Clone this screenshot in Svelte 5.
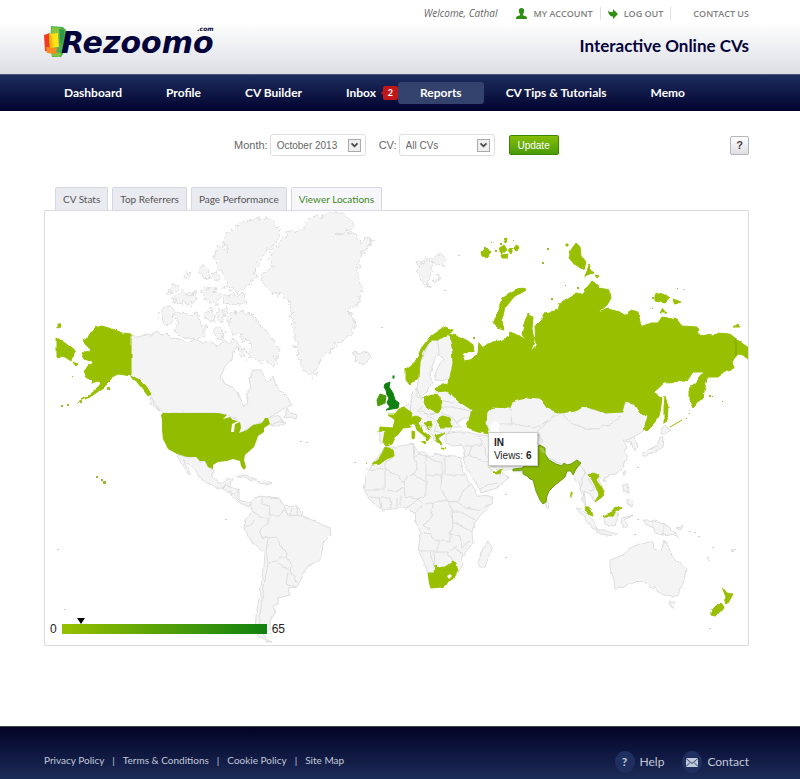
<script>
	const account = [
		{ label: 'MY ACCOUNT', icon: 'user' },
		{ label: 'LOG OUT', icon: 'arrow' },
		{ label: 'CONTACT US', icon: '' }
	];

	const nav = [
		{ label: 'Dashboard' },
		{ label: 'Profile' },
		{ label: 'CV Builder' },
		{ label: 'Inbox', badge: 2 },
		{ label: 'Reports', active: true },
		{ label: 'CV Tips & Tutorials' },
		{ label: 'Memo' }
	];

	const tabs = ['CV Stats', 'Top Referrers', 'Page Performance', 'Viewer Locations'];
	const footerLinks = ['Privacy Policy', 'Terms & Conditions', 'Cookie Policy', 'Site Map'];

	let activeTab = 'Viewer Locations';
	let month = 'October 2013';
	let cv = 'All CVs';

	const max = 65;
	const hovered = { code: 'IN', views: 6 };

	// countries without any views
	const land = [
		// north america
		'131,335 140,337 145,334 150,335 157,331 161,335 167,333 172,338 180,339 187,343 195,339 203,343 210,341 217,346 224,340 229,344 233,338 238,345 233,352 232,360 225,366 220,377 223,383 232,387 238,392 241,400 244,406 248,403 246,395 251,388 249,379 253,370 260,370 264,378 267,383 273,377 277,387 284,394 290,400 292,405 280,411 270,416 277,416 283,420 274,426 270,423 267,418 262,423 253,425 247,430 239,433 241,424 235,419 227,415 218,413 163,413 153,401 150,394 140,381 131,376',
		'284,418 288,408 291,413 297,415 296,419 290,417',
		'271,425 280,421 285,422 276,427',
		'151,397 160,411 155,408 150,401',
		'177,455 187,457 196,457 200,461 205,461 208,467 213,469 213,477 217,483 225,483 227,478 233,478 230,487 239,490 239,500 247,503 252,503 249,507 240,503 232,495 222,489 207,483 198,475 193,468 183,459 186,466 191,473 188,473 181,463',
		'236,476 243,474 251,477 257,480 251,480 244,477',
		'257,482 265,481 272,483 266,485 259,484',
		// south america
		'251,503 255,498 262,496 270,498 280,499 285,505 297,507 305,518 312,520 320,524 330,528 331,535 323,543 322,557 318,562 307,567 303,575 297,587 290,588 289,595 278,598 278,604 273,606 275,613 270,621 270,628 263,634 265,639 272,642 266,642 258,636 255,627 257,608 260,595 262,580 264,553 253,543 244,528 245,520 251,513',
		// iceland
		'352,353 356,351 358,354 368,352 372,357 368,361 362,364 355,361 356,357',
		// scandinavia
		'430,340 438,340 443,336 450,334 452,348 455,365 450,378 442,381 435,379 436,370 443,359 438,354 433,364 430,375 432,383 427,392 420,397 417,388 419,377 420,362',
		// central and eastern europe
		'403,408 410,402 413,397 412,391 417,388 417,397 424,399 436,397 436,389 449,386 457,400 472,410 469,418 463,418 456,423 462,428 453,428 449,433 441,436 436,443 429,432 424,426 415,425 407,421',
		'379,430 385,432 384,442 380,442',
		// asia
		'446,434 456,432 467,432 479,435 490,436 486,422 487,412 493,407 510,408 513,402 527,397 540,398 548,408 560,413 583,406 605,413 622,412 626,401 634,403 641,413 648,418 644,430 635,437 638,447 634,451 631,442 623,441 627,447 624,451 627,458 624,466 617,473 603,479 598,477 602,488 601,495 594,501 590,494 584,491 586,507 591,508 593,516 587,511 583,500 581,487 575,479 572,470 560,466 547,458 540,462 530,474 513,470 500,470 490,465 486,461 493,472 502,471 508,478 497,488 481,493 477,485 463,463 465,451 462,445 453,446 446,443',
		'546,502 550,505 549,509 546,507',
		'661,430 664,425 671,430 665,434 661,434',
		'643,453 650,448 657,447 660,437 664,437 663,447 654,452 646,457 642,457',
		'623,471 626,471 624,476',
		'623,484 627,484 628,493 624,491',
		'627,499 633,501 632,507 627,504',
		'576,508 581,509 593,520 598,530 592,528 584,518',
		'597,531 605,531 617,534 616,536 600,534',
		'603,517 609,514 619,513 615,526 607,525',
		'622,518 631,516 624,520 629,526 624,528 621,523',
		'642,520 650,520 658,522 668,526 676,534 679,538 670,534 662,535 655,533 653,527 645,524',
		'677,528 683,526 681,530',
		'588,475 592,479 589,474',
		'603,480 606,480 604,483',
		// africa
		'385,447 395,447 413,444 418,452 424,452 430,457 435,454 445,455 462,457 460,463 466,477 472,485 479,496 493,497 491,505 475,522 472,532 473,543 462,556 463,566 458,572 440,575 428,573 422,557 418,550 421,533 415,523 414,513 408,507 400,508 382,510 370,500 364,490 366,477 372,465',
		'488,542 492,547 485,567 479,567 479,557 482,550',
		// australia
		'610,560 623,555 632,547 642,543 647,541 653,542 654,548 662,551 664,540 669,548 671,555 677,560 686,570 683,583 678,595 672,597 665,596 657,591 655,586 652,589 645,582 630,583 624,587 615,588 614,580 610,568',
		'669,602 676,602 673,609',
		// small pacific islands
		'707,558 711,561 708,558',
		'731,551 736,549 733,552'
	];

	const arctic = [
		'260,275 273,267 268,258 277,247 287,233 298,231 307,227 308,218 318,217 330,211 347,215 355,227 346,232 335,235 350,233 356,233 360,242 366,238 373,240 367,248 362,255 359,265 358,277 362,290 358,303 350,310 347,313 355,318 353,333 345,340 337,343 330,350 322,357 318,367 313,377 303,371 298,357 295,340 293,323 290,303 283,295 272,293 265,285',
		'223,237 232,231 240,223 253,219 270,219 281,230 277,241 267,253 257,267 255,277 250,284 240,292 225,288 226,280 218,268 215,257 217,245 222,247 228,252 224,244',
		'222,297 232,295 245,294 247,303 234,305 225,304',
		'162,307 170,306 175,312 172,321 168,326 161,322',
		'175,314 184,312 190,316 197,313 200,321 205,327 205,337 196,339 183,338 174,332 177,325',
		'228,313 240,312 252,315 259,324 267,332 273,341 280,350 276,357 275,367 267,361 260,362 252,357 247,360 249,349 251,343 243,340 240,333 234,334 229,325',
		'167,293 171,287 177,283 179,288 171,294',
		'173,298 182,291 188,294 196,293 197,301 190,304 182,302 176,304',
		'183,277 187,272 191,273 188,280',
		'199,267 204,265 209,270 210,278 202,277',
		'212,272 218,274 221,282 215,282',
		'202,291 209,288 216,290 220,294 218,303 211,303 204,299',
		'205,311 213,310 215,317 212,323 206,320',
		'217,310 225,308 225,315 221,324 217,319',
		'214,327 221,327 224,336 220,341 215,336',
		'239,346 246,350 243,357 238,353',
		// svalbard
		'417,262 424,264 428,257 432,263 430,280 427,288 422,281 418,272',
		'432,257 440,254 447,258 443,265 435,264',
		'435,275 439,277 441,282 436,281'
	];

	// countries with a handful of views
	const viewed = [
		// russia
		'450,334 460,337 468,341 473,345 474,351 468,353 461,352 465,361 472,359 478,353 479,342 483,347 493,342 500,341 508,337 510,332 517,335 525,341 522,335 524,324 528,313 533,317 532,329 534,340 531,352 536,345 535,326 541,320 545,313 558,310 560,303 573,295 583,293 592,281 598,285 599,289 610,291 611,298 607,305 598,313 608,309 620,312 628,315 630,310 638,312 641,327 650,323 658,323 662,317 677,320 682,326 697,327 698,334 713,336 717,333 730,334 740,342 749,348 749,360 743,355 738,354 733,360 734,368 725,371 717,377 707,377 705,387 703,397 693,408 689,400 689,390 697,380 703,372 693,372 687,381 665,382 653,393 662,398 660,412 656,422 648,430 643,429 648,417 640,413 633,403 625,401 622,412 605,413 594,409 583,406 575,411 560,413 547,408 540,398 527,397 512,402 510,408 492,407 487,412 486,424 489,434 478,432 467,427 470,417 472,410 457,400 448,390 450,377 453,363 452,347',
		'57,338 65,343 76,352 72,357 71,361 62,355 57,358',
		'57,324 60,324 61,327 57,328',
		'73,362 78,364 76,366',
		'665,396 668,407 667,421 664,423 664,407',
		'494,322 498,310 503,298 513,292 524,287 526,290 513,298 505,308 501,322 504,329 497,327',
		'487,344 491,344 491,347 487,347',
		'481,252 487,248 491,253 486,258 482,256',
		'498,249 504,245 507,250 502,254',
		'501,255 508,254 507,258 502,258',
		'508,250 513,249 511,254',
		'515,245 519,247 517,251 514,250',
		'503,239 507,238 506,243',
		'569,258 571,250 576,243 580,247 581,255 586,262 584,270 575,265',
		'589,265 594,273 585,277',
		'566,244 569,244 569,246 566,246',
		'655,295 663,293 670,298 665,303 655,301',
		'673,299 681,302 675,304',
		'660,313 663,308 667,313',
		'733,327 737,324 740,327',
		'595,275 599,276 597,278',
		// norway
		'406,369 415,362 422,347 430,337 445,327 453,330 450,334 443,336 438,340 430,340 423,352 420,362 419,377 410,385 406,380',
		'436,387 446,384 454,389 456,393 445,391 437,392',
		// poland, romania
		'423,398 432,395 440,396 441,407 438,413 427,409',
		'437,420 443,416 450,418 452,427 440,427',
		// france, spain
		'388,414 396,414 400,409 405,408 412,413 410,421 411,427 403,428 400,432 395,438 392,444 386,446 383,442 385,432 379,431 380,427 393,428 395,420',
		// italy
		'410,418 417,416 422,419 418,423 422,430 430,437 427,442 426,437 417,430 415,424 410,423',
		'421,441 427,443 426,445',
		'412,431 415,432 414,439 412,438',
		'424,423 431,422 432,426 427,426 431,431',
		// greece
		'434,436 445,433 438,438 442,445 437,443',
		'441,447 446,448 442,448',
		// morocco
		'372,465 380,458 385,447 393,450 394,455 385,460 380,464',
		// south africa
		'428,573 434,573 435,565 438,568 445,567 453,561 456,563 458,572 450,582 442,587 431,588 429,580',
		'493,472 503,468 501,473 495,474',
		// vietnam, malaysia
		'588,475 593,473 599,476 596,480 603,490 602,497 595,502 599,495 595,485 591,478',
		'585,507 590,507 593,516 588,514',
		'603,516 612,512 617,506 621,508 612,516',
		'571,492 572,492 572,497 571,497',
		// new zealand
		'722,587 727,593 733,594 728,603 724,602 726,597',
		'720,602 724,607 715,617 711,616 713,609'
	];

	const alaska =
		'131,334 123,333 112,329 102,326 95,328 90,333 89,337 83,341 87,346 91,348 91,351 85,352 81,354 84,359 92,361 93,363 87,367 84,373 87,378 92,380 91,383 98,381 101,383 97,389 87,397 78,402 90,397 103,388 110,381 112,377 118,374 125,375 131,376 140,380 146,386 151,394 148,396 142,388 137,382 131,378';
	const usa =
		'163,413 218,413 227,415 223,419 230,417 233,420 238,421 232,424 231,432 234,432 235,424 240,422 241,428 239,433 247,430 253,425 262,423 265,418 268,418 270,424 264,428 264,432 258,436 256,442 254,447 245,455 244,460 246,467 244,470 241,466 240,461 233,459 227,461 218,462 213,465 213,469 208,467 205,461 200,461 196,457 187,457 177,454 168,449 163,439 162,430 162,420 161,415';
	const india =
		'513,469 522,468 529,462 533,452 537,447 540,445 545,448 545,454 549,460 556,464 562,466 564,463 567,465 571,464 577,460 581,463 576,469 573,475 571,471 567,471 565,477 559,482 555,485 549,491 547,496 546,502 543,504 540,500 536,491 533,480 530,479 527,476 523,474 523,470 513,471';
	const ireland = '377,400 380,394 386,396 385,403 378,406';
	const britain =
		'385,384 390,382 389,387 393,393 395,400 399,403 398,408 386,410 390,407 387,403 389,398 387,395 386,390 384,387';

	const borders = [
		// the americas
		'M222,489L226,485L230,487M229,492L233,494L239,490M262,496L262,503L270,507L269,516L278,516L284,511L285,505M284,511L290,515L291,508M290,515L302,516L304,512M297,507V515',
		'M252,511L260,516L268,518L268,523L259,530L262,537L268,538L276,537L280,546L287,553L286,557L292,566L291,573L297,583M245,527L250,525L254,520M266,552L268,538M266,552L268,563L276,562L280,557L286,557M276,562L290,570M288,573L286,583L296,587M268,563L265,580L262,600L260,615L260,628L264,634',
		// africa
		'M394,457L385,462L385,468L403,481L413,474L418,470L414,458L413,444M385,468L366,470M385,468V490H366M403,481L404,487L394,491L388,490M413,474L426,482L426,496L418,499M426,482V455M414,458L418,453L442,464V475H426M445,455V475H464M442,475L441,488L447,500L458,502L463,491L470,485M458,502L466,508L477,510L491,504',
		'M404,487L405,497L418,499L423,505L414,513M425,504L434,502L447,500M433,504L431,517L424,525L430,531L432,538L441,541L450,542L450,534L453,527L452,510L448,500M418,499L405,510M381,508L379,498L370,497M391,508L390,498L379,498M397,508V498M401,508V496M452,512L461,512L475,520M453,522L472,532M450,534L460,536L462,548L470,540M420,532L430,534M438,541L438,552L448,552L457,545M418,551H438M434,552L435,565M447,552L453,561M430,552L435,571M455,548L463,555',
		// europe
		'M411,403L410,411M423,405L418,411L427,414L438,413M427,416L437,420M441,401L455,402M441,407L452,407L470,411M441,413L452,417L456,422M437,424L434,431L444,433',
		// scandinavia
		'M438,340L439,355M430,341L425,352L420,362',
		// asia
		'M478,435L482,441L480,446L465,446M482,443L486,455L493,464M472,446L469,455L485,462M463,458L469,455M480,490L487,485L499,483M500,470V478M499,424L515,424L535,428L548,420L560,413M547,421L537,432L543,444M540,445L532,446L537,433M563,413L570,423L584,428L598,429L610,424L621,417M572,470L578,462L585,472L588,475M585,472L581,487M588,479L594,487L590,491M595,487L593,491M551,459L563,464M635,437L626,440M486,436H512M510,408L512,425',
		'M663,523V535'
	];

	const specks = [
		[300, 441], [306, 442], [354, 462], [225, 519], [57, 549], [64, 609], [381, 327], [505, 557],
		[689, 531], [694, 532], [698, 536], [712, 547], [505, 494], [709, 628], [458, 255], [444, 290],
		[683, 289], [637, 467], [631, 515], [637, 519], [634, 534]
	];
	const greenSpecks = [
		[101, 479, 2], [103, 481, 3], [96, 476, 2], [61, 405, 2], [67, 404, 2], [80, 401, 2], [72, 376, 1],
		[107, 387, 3], [547, 248, 2], [542, 262, 2], [551, 298, 2], [565, 285, 1], [677, 288, 1],
		[709, 395, 2], [712, 396, 1], [722, 401, 1], [686, 418, 1], [689, 413, 1], [366, 463, 1],
		[491, 242, 1], [484, 247, 2], [495, 250, 2], [500, 243, 2], [513, 240, 1], [577, 287, 2],
		[652, 297, 2], [652, 308, 1], [705, 380, 2], [473, 337, 2]
	];
</script>

<div class="page">
	<header>
		<a class="logo" href="/" aria-label="Rezoomo.com">
			<svg class="mark" viewBox="0 0 22 32" aria-hidden="true">
				<path fill="#4caf50" d="M7 0l12 1 3 3v7l-3 17-2 3H8L6 20z" />
				<path fill="#86c440" d="M8 1l9 1-2 7H7zM9 26l8 1-1 4-8-1z" />
				<path fill="#2e9a48" d="M15 3l5 1v7l-3 8z" />
				<path fill="#ef3b24" d="M0 9l6-2 1 19-6-1z" />
				<path fill="#f6891f" d="M2 21l11 1-1 6-9-1z" />
				<path fill="#ffe11a" d="M5 8l9-1 1 14-9 1z" />
				<path fill="#fbb615" d="M5 8l3 2 1 12H6z" />
			</svg>
			<span class="word">Rezoomo</span>
			<small>.com</small>
		</a>
		<div class="head-right">
			<ul class="account">
				<li class="welcome">Welcome, Cathal</li>
				{#each account as item}
					<li class={item.icon}>
						<a href="#account">
							{#if item.icon === 'user'}
								<svg width="11" height="11" viewBox="0 0 11 11" aria-hidden="true">
									<path fill="#2f8f12" d="M5.500 0C7.500 0 8.400 1.500 8.200 3.200 8 4.800 7.300 5.600 6.900 6.200V7.300L10 8.300Q11 8.800 11 11H0Q0 8.800 1 8.300L4.100 7.300V6.200C3.700 5.600 3 4.800 2.800 3.200 2.600 1.500 3.500 0 5.500 0z" />
								</svg>
							{:else if item.icon === 'arrow'}
								<svg width="10" height="10" viewBox="0 0 10 10" aria-hidden="true">
									<path fill="#2f8f12" d="M0 0Q0 3 3 3H5V0L10 5 5 10V7.500H4Q0 7 0 0z" />
								</svg>
							{/if}
							{item.label}
						</a>
					</li>
				{/each}
			</ul>
			<p class="tagline">Interactive Online CVs</p>
		</div>
	</header>

	<nav>
		{#each nav as item}
			<a href="#nav" class:active={item.active}>
				{item.label}
				{#if item.badge}<span class="badge">{item.badge}</span>{/if}
			</a>
		{/each}
	</nav>

	<main>
		<form class="filters" on:submit|preventDefault>
			<label for="month">Month:</label>
			<span class="select">
				<select id="month" bind:value={month}>
					<option>October 2013</option>
				</select>
				<svg width="13" height="13" viewBox="0 0 13 13" aria-hidden="true">
					<path fill="none" stroke="#444" stroke-width="2" d="M3 4l3.500 3.500L10 4" />
				</svg>
			</span>
			<label class="cv" for="cv">CV:</label>
			<span class="select">
				<select id="cv" bind:value={cv}>
					<option>All CVs</option>
				</select>
				<svg width="13" height="13" viewBox="0 0 13 13" aria-hidden="true">
					<path fill="none" stroke="#444" stroke-width="2" d="M3 4l3.500 3.500L10 4" />
				</svg>
			</span>
			<button class="update" type="submit">Update</button>
			<button class="help" type="button">?</button>
		</form>

		<div class="tabs">
			{#each tabs as tab}
				<button type="button" class:selected={tab === activeTab} on:click={() => (activeTab = tab)}>{tab}</button>
			{/each}
		</div>

		<section class="map">
			<svg class="world" viewBox="45 211 703 434" role="img" aria-label="Viewer locations">
				<defs>
					<filter id="coast" filterUnits="userSpaceOnUse" x="45" y="211" width="703" height="434" color-interpolation-filters="sRGB">
						<feTurbulence type="fractalNoise" baseFrequency="0.15" numOctaves="1" seed="4" />
						<feDisplacementMap in="SourceGraphic" scale="4" xChannelSelector="R" yChannelSelector="G" />
					</filter>
					<filter id="fjords" filterUnits="userSpaceOnUse" x="45" y="211" width="703" height="434" color-interpolation-filters="sRGB">
						<feTurbulence type="fractalNoise" baseFrequency="0.2" numOctaves="2" seed="9" />
						<feDisplacementMap in="SourceGraphic" scale="10" xChannelSelector="R" yChannelSelector="G" />
					</filter>
				</defs>

				<g class="land" filter="url(#fjords)">
					{#each arctic as points}<polygon {points} />{/each}
				</g>
				<g class="land" filter="url(#coast)">
					{#each land as points}<polygon {points} />{/each}
					{#each borders as d}<path {d} />{/each}
				</g>
				<path class="sea" d="M490 427L495 421 500 424 498 430 503 434H492z" />
				<g class="viewed" filter="url(#coast)">
					{#each viewed as points}<polygon {points} />{/each}
					<polygon points={alaska} />
				</g>
				<path class="kurils" d="M670 427L682 420" />
				<path class="seam" d="M736 338V356" />
				<path class="lesotho" d="M447 576l3-2 2 2-3 3z" />
				<polygon class="usa" points={usa} />
				<polygon class="india" points={india} />
				<path class="kashmir" d="M538 447L543 448 546 454 541 452z" />
				<polygon class="ireland" points={ireland} />
				<polygon class="britain" points={britain} />
				<rect class="britain" x="393" y="376" width="1" height="2" />
				{#each specks as [x, y]}<rect class="speck" {x} {y} width="2" height="1" />{/each}
				{#each greenSpecks as [x, y, size]}<rect class="green-speck" {x} {y} width={size} height={size} />{/each}
			</svg>

			<div class="legend">
				<span>0</span>
				<div class="scale">
					<i style="left: {(hovered.views / max) * 100}%"></i>
				</div>
				<span>{max}</span>
			</div>

			<div class="tooltip">
				<b>{hovered.code}</b>
				<div>Views: <b>{hovered.views}</b></div>
			</div>
		</section>
	</main>

	<footer>
		<ul class="links">
			{#each footerLinks as link}
				<li><a href="#footer">{link}</a></li>
			{/each}
		</ul>
		<div class="support">
			<a href="#help"><span class="round">?</span>Help</a>
			<a href="#contact">
				<span class="round">
					<svg width="12" height="9" viewBox="0 0 12 9" aria-hidden="true">
						<path fill="#c3c9d8" d="M0 0h12v9H0z" />
						<path fill="none" stroke="#33426e" d="M0 .5l6 5 6-5M0 8.500l4-4M12 8.500l-4-4" />
					</svg>
				</span>
				Contact
			</a>
		</div>
	</footer>
</div>

<style>
	:global(body) {
		margin: 0;
		background: #fff;
	}

	.page {
		font-family: Lato, 'Open Sans', sans-serif;
		color: #666;
	}

	a {
		color: inherit;
		text-decoration: none;
	}

	ul {
		display: flex;
		margin: 0;
		padding: 0;
		list-style: none;
	}

	header {
		display: flex;
		justify-content: space-between;
		height: 74px;
		padding: 0 51px 0 44px;
		background: linear-gradient(#fff 30%, #dcdee4);
	}

	.logo {
		display: flex;
		align-items: center;
		height: 32px;
		margin-top: 26px;
		position: relative;
		color: #04043a;
	}

	.mark {
		width: 22px;
		height: 32px;
	}

	.word {
		margin-left: -5px;
		padding-top: 2px;
		font: italic bold 30px/30px 'DejaVu Sans', sans-serif;
	}

	.logo small {
		position: absolute;
		top: 0;
		right: 0;
		font: italic bold 6px/6px 'DejaVu Sans', sans-serif;
	}

	.head-right {
		display: flex;
		flex-direction: column;
		align-items: flex-end;
	}

	.account {
		margin-top: 7px;
		font: 600 9px/13px 'Open Sans', sans-serif;
		color: #808080;
	}

	.account li {
		padding: 0 7px;
	}

	.account li.welcome {
		padding-right: 12px;
		font-size: 10px;
		font-style: italic;
		font-weight: 400;
		color: #666;
	}

	.account li:last-child {
		padding: 0 0 0 22px;
	}

	.account a {
		display: flex;
		align-items: center;
		gap: 6px;
	}

	.user,
	.arrow {
		border-right: 1px solid #e0e0e0;
	}

	.tagline {
		margin: 15px 0 0;
		font-size: 17px;
		line-height: 22px;
		font-weight: bold;
		color: #04043a;
	}

	nav {
		display: flex;
		align-items: center;
		height: 37px;
		box-sizing: border-box;
		padding: 0 42px;
		border-top: 1px solid #4a5680;
		background: linear-gradient(#1c2d5e, #03032f);
	}

	nav a {
		position: relative;
		padding: 0 22px;
		border-radius: 3px;
		font-size: 12px;
		line-height: 22px;
		font-weight: bold;
		color: #fff;
		white-space: nowrap;
	}

	nav a.active {
		background: #34426e;
	}

	.badge {
		position: absolute;
		top: 4px;
		right: 0;
		width: 15px;
		border-radius: 2px;
		background: #c01818;
		font-size: 9px;
		line-height: 14px;
		text-align: center;
	}

	.badge::before {
		content: '';
		position: absolute;
		top: 5px;
		left: -2px;
		border: 2px solid transparent;
		border-left: 0;
		border-right-color: #c01818;
	}

	main {
		padding: 23px 51px 80px 44px;
	}

	.filters {
		display: flex;
		align-items: center;
		margin-bottom: 31px;
		padding-left: 190px;
		font: 11px/22px 'Liberation Sans', Arial, sans-serif;
	}

	.filters .cv {
		margin-left: 13px;
	}

	.select {
		position: relative;
		display: flex;
		margin-left: 2px;
	}

	select {
		width: 96px;
		height: 22px;
		padding: 0 6px;
		border: 1px solid #ddd;
		border-radius: 3px;
		background: #fff;
		color: #666;
		font: 10px 'Liberation Sans', Arial, sans-serif;
		appearance: none;
	}

	.select svg {
		position: absolute;
		top: 5px;
		right: 5px;
		box-sizing: border-box;
		border: 1px solid #aaa;
		background: #eee;
		pointer-events: none;
	}

	.update {
		width: 50px;
		height: 20px;
		margin-left: 14px;
		padding: 0;
		border: 1px solid #3c8500;
		border-radius: 2px;
		background: linear-gradient(#86bd08, #4a9c08);
		color: #fff;
		font: 10px 'Liberation Sans', Arial, sans-serif;
	}

	.help {
		width: 19px;
		height: 19px;
		margin-left: auto;
		padding: 0;
		border: 1px solid #b5b5bd;
		border-radius: 2px;
		background: linear-gradient(#fff, #dedee4);
		color: #444;
		font: bold 11px 'Liberation Sans', Arial, sans-serif;
	}

	.tabs {
		display: flex;
		gap: 4px;
		padding-left: 11px;
	}

	.tabs button {
		height: 23px;
		padding: 0 7px;
		border: 1px solid #d6d6e2;
		border-bottom: 0;
		border-radius: 2px 2px 0 0;
		background: #eaeaf1;
		color: #555;
		font: 10px Lato, 'Open Sans', sans-serif;
		white-space: nowrap;
	}

	.tabs .selected {
		background: #f7f7fb;
		color: #3a8a1a;
	}

	.map {
		position: relative;
		border: 1px solid #dadae0;
		border-radius: 0 0 2px 2px;
	}

	.world {
		display: block;
		width: 100%;
	}

	.land {
		fill: #f4f4f4;
		stroke: #dcdcdc;
		stroke-width: 1;
	}

	.land path {
		fill: none;
	}

	.sea,
	.lesotho {
		fill: #fff;
	}

	.viewed {
		fill: #98c000;
		stroke: #98c000;
		stroke-width: 1;
	}

	.kurils {
		stroke: #98c000;
	}

	.seam {
		stroke: #7f9f00;
	}

	.usa {
		fill: #92bc00;
	}

	.india {
		fill: #8ab800;
		stroke: #6f9a10;
	}

	.kashmir {
		fill: #a0c840;
	}

	.ireland {
		fill: #4a9a0a;
		stroke: #4a9a0a;
	}

	.britain {
		fill: #108010;
		stroke: #108010;
	}

	.speck {
		fill: #ccc;
	}

	.green-speck {
		fill: #98b830;
	}

	.legend {
		position: absolute;
		left: 5px;
		bottom: 9px;
		display: flex;
		align-items: center;
		gap: 5px;
		color: #222;
		font: 12px/14px 'Liberation Sans', Arial, sans-serif;
	}

	.scale {
		position: relative;
		width: 205px;
		height: 10px;
		background: linear-gradient(to right, #98c000, #108010);
	}

	.scale i {
		position: absolute;
		top: -6px;
		border: 4px solid transparent;
		border-top: 6px solid #000;
		border-bottom: 0;
		transform: translateX(-50%);
	}

	.tooltip {
		position: absolute;
		top: 51%;
		left: 63%;
		padding: 3px 5px;
		border: 1px solid #ccc;
		background: #fff;
		box-shadow: 1px 1px 2px rgba(0, 0, 0, 0.3);
		color: #222;
		font: 10px/13px 'Liberation Sans', Arial, sans-serif;
		white-space: nowrap;
	}

	footer {
		display: flex;
		justify-content: space-between;
		align-items: flex-start;
		padding: 24px 51px 6px 44px;
		border-top: 1px solid #444;
		background: linear-gradient(#030326, #1b2b58);
		color: #c3c9d8;
	}

	.links {
		font-size: 10px;
		line-height: 18px;
	}

	.links li + li::before {
		content: '|';
		margin: 0 8px;
	}

	.support {
		display: flex;
		gap: 18px;
		font-size: 12px;
		line-height: 22px;
	}

	.support a {
		display: flex;
		gap: 5px;
	}

	.round {
		display: flex;
		align-items: center;
		justify-content: center;
		width: 20px;
		border-radius: 50%;
		background: #1f3060;
		font-weight: bold;
	}
</style>
